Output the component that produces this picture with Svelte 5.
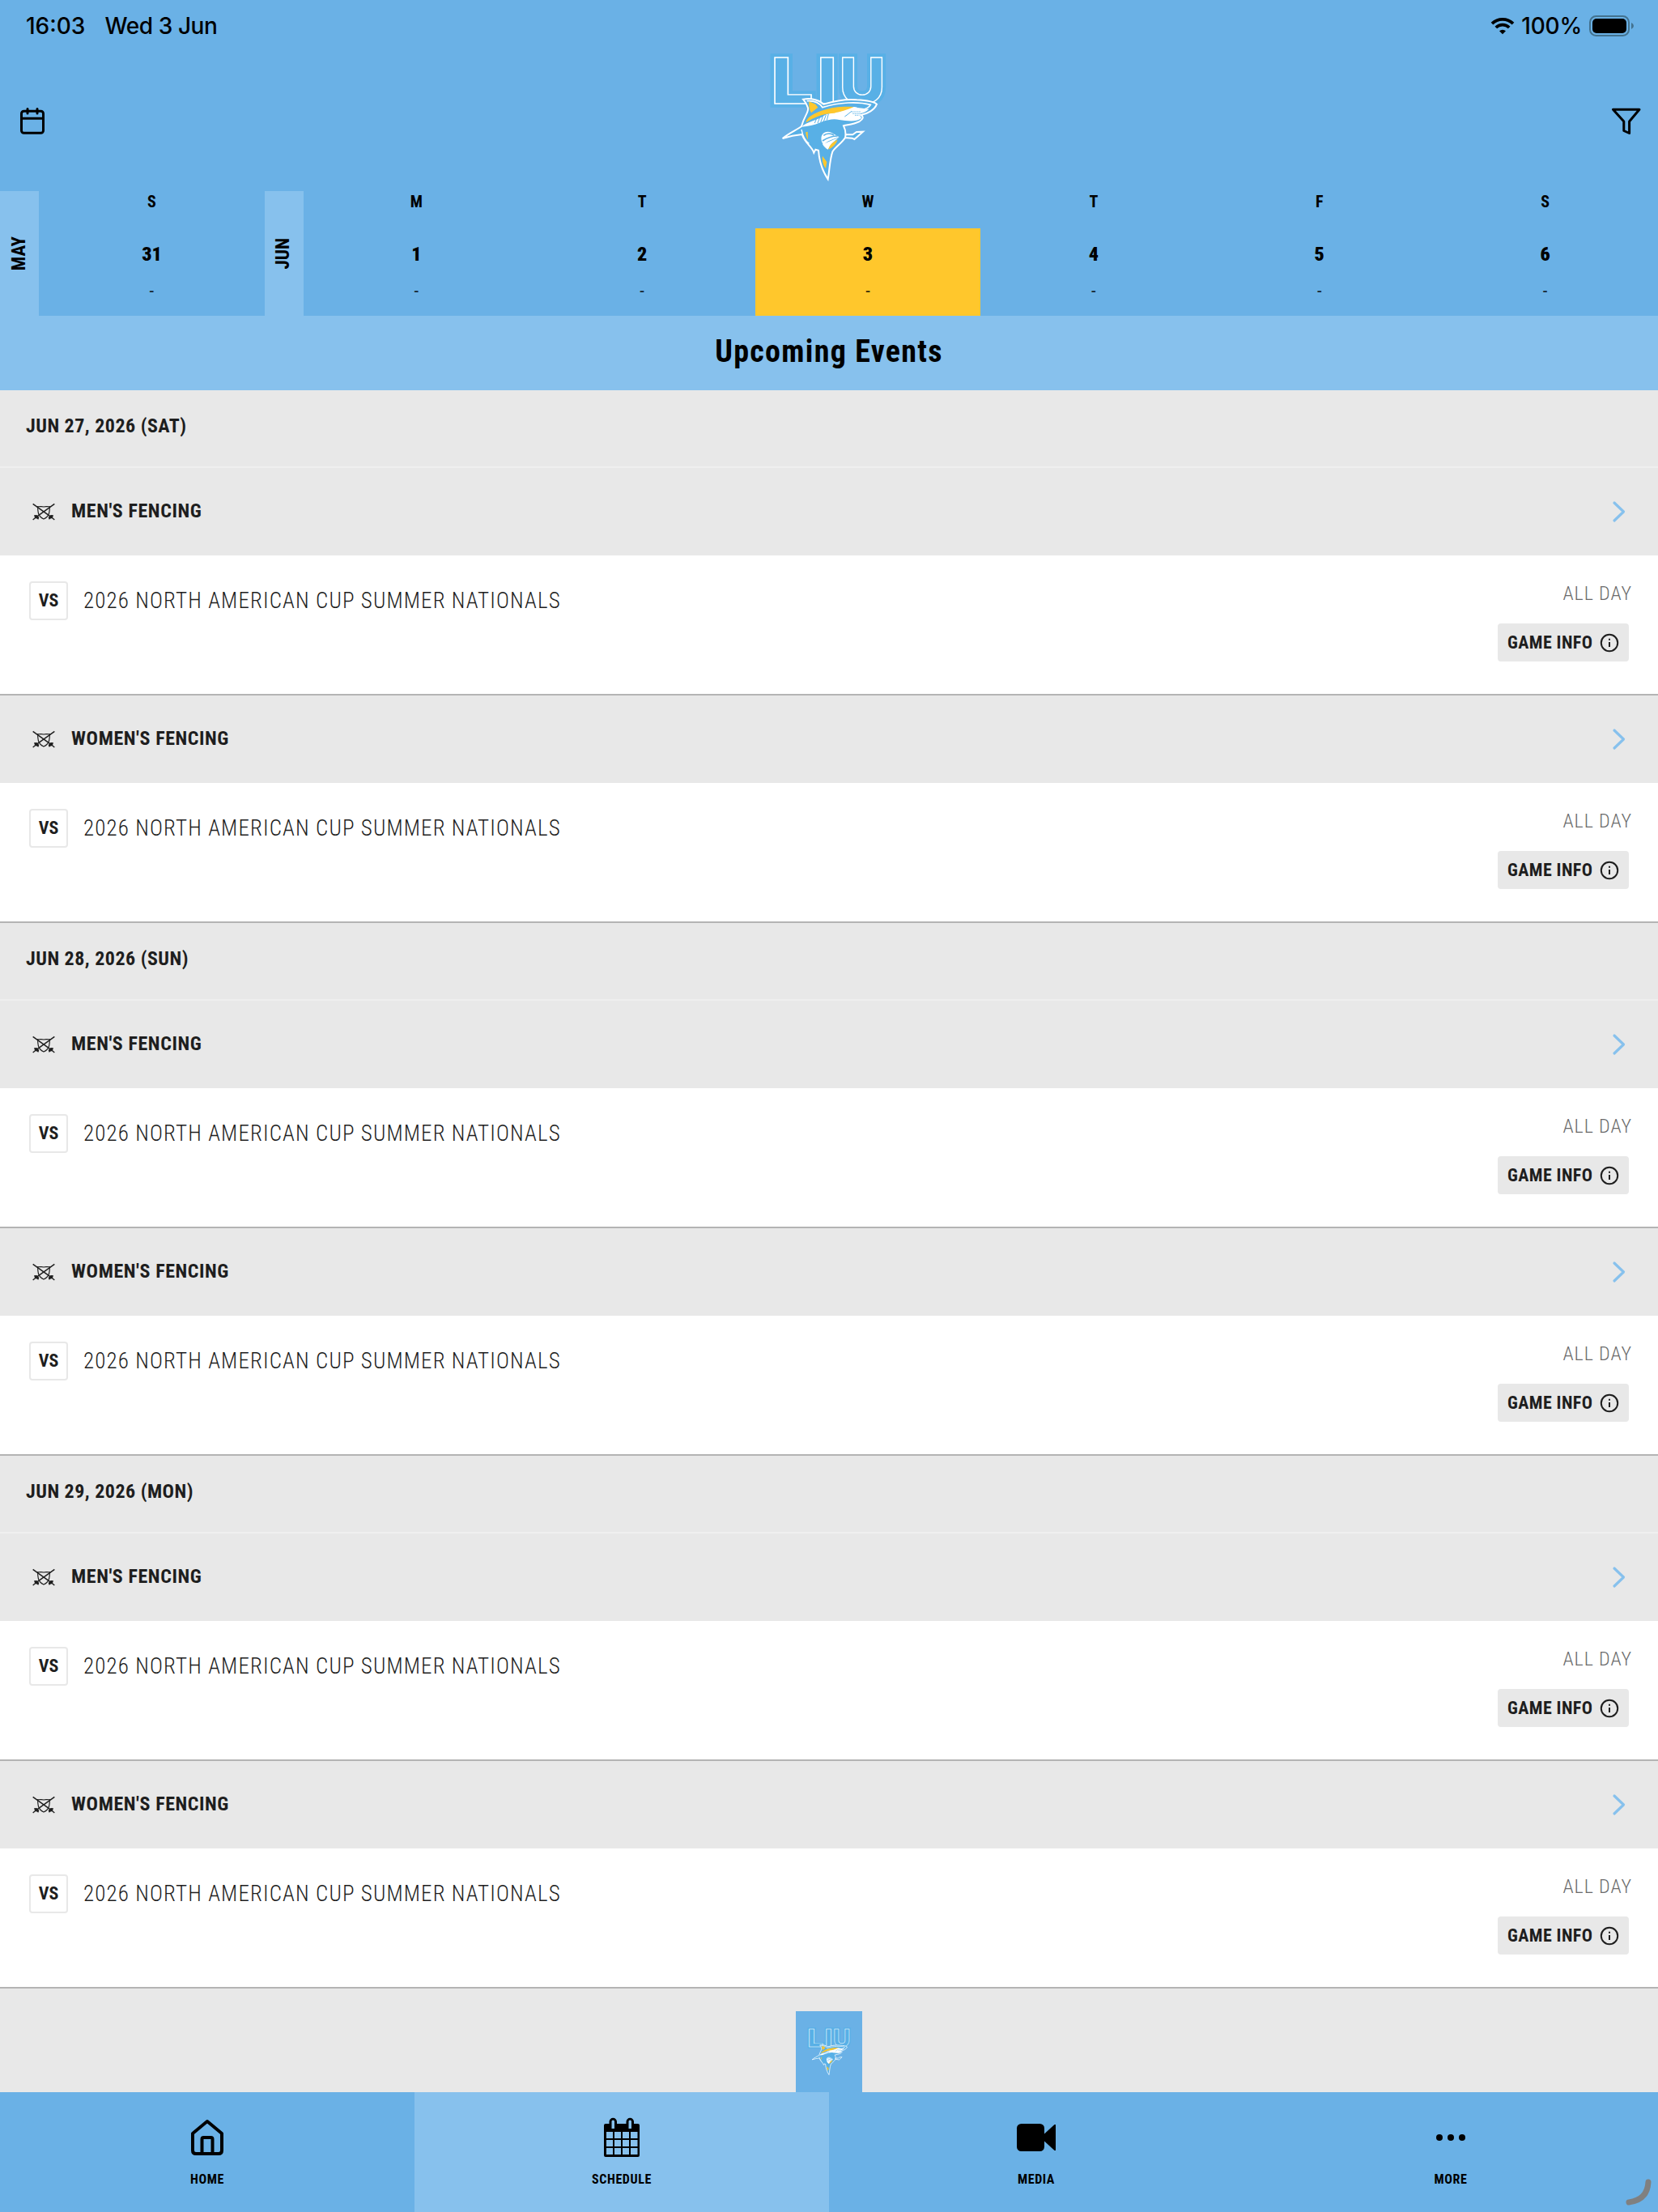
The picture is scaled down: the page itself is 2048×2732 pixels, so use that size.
<script lang="ts">
  type Game = { sport: string; title: string; time: string };

  const days = [
    { letter: 'M', num: 1 },
    { letter: 'T', num: 2 },
    { letter: 'W', num: 3 },
    { letter: 'T', num: 4 },
    { letter: 'F', num: 5 },
    { letter: 'S', num: 6 }
  ];

  const title = '2026 NORTH AMERICAN CUP SUMMER NATIONALS';
  const games: Game[] = [
    { sport: "MEN'S FENCING", title, time: 'ALL DAY' },
    { sport: "WOMEN'S FENCING", title, time: 'ALL DAY' }
  ];
  const events = ['JUN 27, 2026 (SAT)', 'JUN 28, 2026 (SUN)', 'JUN 29, 2026 (MON)'].map((date) => ({
    date,
    games
  }));

  const tabs = ['HOME', 'SCHEDULE', 'MEDIA', 'MORE'];
  let selected = $state(3);
  let active = $state('SCHEDULE');
</script>

{#snippet logo()}
  <svg class="logo" viewBox="-3 42 570 516" aria-label="LIU Sharks">
    {#each ['glow', 'edge'] as layer}
      <g class="letters {layer}">
        <text x="65" y="234" textLength="160" lengthAdjust="spacingAndGlyphs">L</text>
        <text x="236" y="234" textLength="77" lengthAdjust="spacingAndGlyphs">I</text>
        <text x="319" y="234" textLength="173" lengthAdjust="spacingAndGlyphs">U</text>
      </g>
    {/each}
    <path
      class="body"
      d="M186 218 C215 212 245 220 262 236 C310 222 345 216 385 220 C425 222 450 228 459 236 C452 256 425 272 400 276 C412 282 408 292 395 300 C370 312 350 312 336 316 C343 330 345 345 342 360 L368 362 L376 366 L408 338 L384 339 L370 349 L344 348 L342 360 C330 380 305 395 295 412 C285 440 284 480 278 514 C262 490 246 455 243 407 L232 404 L226 416 C218 390 195 385 182 348 C160 350 135 355 110 363 C130 345 165 330 180 318 C190 280 208 265 204 250 C200 235 195 228 186 218 Z"
    />
    <path class="line" d="M200 224 C232 222 250 236 258 248 C320 228 390 226 436 238 C430 250 412 256 398 258" />
    <path
      class="white"
      d="M180 320 C200 300 240 296 268 276 C300 262 320 272 350 250 C372 240 392 252 430 254 C420 264 408 268 398 270 L396 278 C400 282 402 286 402 288 C380 304 350 298 320 294 C296 288 270 296 250 304 C226 314 205 318 180 320 Z"
    />
    <path class="gold" d="M208 226 L232 236 L241 248 L216 268 C208 256 207 240 208 226 Z" />
    <path
      class="gold"
      d="M197 304 C200 286 216 276 250 262 C296 246 330 244 374 246 C345 260 326 262 302 269 C262 270 222 286 197 304 Z"
    />
    <path class="slit" d="M238 284 L229 306 M249 282 L240 306 M260 279 L251 304 M271 276 L262 300 M280 272 L274 296" />
    <path class="dots" d="M366 264 H400 M370 271 H398 M378 277 H394" />
    <path class="slit" d="M340 282 C352 274 358 268 366 262" />
    <path class="slit" d="M386 248 H408" />
    <path class="gold" d="M196 340 L203 338 L204 368 C199 358 196 350 196 340 Z" />
    <path class="line thin" d="M180 330 C186 360 196 374 208 382" />
    <path class="white" d="M254 356 C258 340 276 334 292 342 L320 358 C296 366 276 372 262 386 C254 378 252 366 254 356 Z" />
    <path class="slit wide" d="M262 352 C274 342 290 344 300 350 M258 372 C276 360 296 354 314 354" />
    <path class="white" d="M258 384 C276 378 296 368 318 360 C300 374 286 386 278 404 C270 400 262 392 258 384 Z" />
    <path class="gold" d="M280 404 C284 384 300 374 314 368 C308 384 296 396 280 404 Z" />
    <path class="gold" d="M258 428 L274 450 L270 474 C260 462 256 446 258 428 Z" />
  </svg>
{/snippet}

<div class="page">
  <div class="status">
    <span>16:03</span>
    <span class="day-name">Wed 3 Jun</span>
    <span class="system">
      <svg class="wifi" width="30" height="22" viewBox="0 0 30 22">
        <path d="M2 8.2 A18.5 18.5 0 0 1 28 8.2" />
        <path d="M6.8 13 A11.7 11.7 0 0 1 23.2 13" />
        <path class="tip" d="M11 17.2 A6 6 0 0 1 19 17.2 L15 21.2 Z" />
      </svg>
      <span class="percent">100%</span>
      <svg width="56" height="26" viewBox="0 0 56 26">
        <rect x="1" y="1" width="48" height="24" rx="7.5" fill="none" stroke="#43728f" stroke-width="2" />
        <rect x="4" y="4" width="42" height="18" rx="5" />
        <path d="M52 9 Q55 10.500 55 13 Q55 15.500 52 17 Z" fill="#43728f" />
      </svg>
    </span>
  </div>

  <header>
    <svg class="icon" width="32" height="36" viewBox="0 0 32 36">
      <rect x="2.500" y="5.200" width="27" height="27" rx="3" />
      <path d="M2.500 14.200 H29.500 M10 2.500 V8 M22 2.500 V8" />
    </svg>
    {@render logo()}
    <svg class="icon" width="38" height="36" viewBox="0 0 38 36">
      <path d="M2.500 3.200 H35 L22.600 18 V32.500 L15.800 29.500 V18 Z" />
    </svg>
  </header>

  <div class="week">
    <div class="month"><span>MAY</span></div>
    <div class="day">
      <span class="letter">S</span>
      <div class="cell"><b>31</b><i>-</i></div>
    </div>
    <div class="month"><span>JUN</span></div>
    {#each days as day}
      <div class="day">
        <span class="letter">{day.letter}</span>
        <button class="cell" class:selected={selected === day.num} onclick={() => (selected = day.num)}>
          <b>{day.num}</b><i>-</i>
        </button>
      </div>
    {/each}
  </div>

  <h1>Upcoming Events</h1>

  <main>
    {#each events as group}
      <h2>{group.date}</h2>
      {#each group.games as game}
        <section>
          <div class="sport">
            <svg class="foils" width="28" height="22" viewBox="60 62 84 66">
              <path d="M62 66 L134 118 M142 66 L70 118" stroke-width="4.500" />
              <path d="M80 76 C88 77 94 74 102 77 C110 74 116 77 124 76 C124 98 122 114 102 122 C82 114 80 98 80 76 Z" stroke-width="3.500" />
              <path d="M62 125 L70 118 M142 125 L134 118" stroke-width="4" />
              <path class="guard" d="M66 108 L76 107 L85 116 L82 124 L75 120 L70 120 Z M138 108 L128 107 L119 116 L122 124 L129 120 L134 120 Z" />
            </svg>
            <h3>{game.sport}</h3>
            <svg class="chevron" width="18" height="28" viewBox="0 0 18 28">
              <path d="M3 3 L14.500 14 L3 25" />
            </svg>
          </div>
          <div class="game">
            <span class="vs">VS</span>
            <span class="title">{game.title}</span>
            <div class="side">
              <span class="time">{game.time}</span>
              <button class="info">
                GAME INFO
                <svg width="24" height="24" viewBox="0 0 24 24">
                  <circle cx="12" cy="12" r="10.200" />
                  <path d="M12 11 V17 M12 6.800 V8.800" />
                </svg>
              </button>
            </div>
          </div>
        </section>
      {/each}
    {/each}
  </main>

  <footer>
    <div class="badge">{@render logo()}</div>
  </footer>

  <nav>
    {#each tabs as tab}
      <button class:active={active === tab} onclick={() => (active = tab)}>
        <svg width="52" height="52" viewBox="0 0 52 52">
          {#if tab === 'HOME'}
            <path
              class="stroke"
              d="M26 6 L44 21 V42 Q44 46 40 46 H12 Q8 46 8 42 V21 Z M19.500 46 V28 Q19.500 26 21.500 26 H30.500 Q32.500 26 32.500 28 V46"
            />
          {:else if tab === 'SCHEDULE'}
            <path
              fill-rule="evenodd"
              d="M6 9 H10.500 V6.500 A4.500 4.500 0 0 1 20 6.500 V9 H31.500 V6.500 A4.500 4.500 0 0 1 41 6.500 V9 H46 Q48 9 48 11 V48 Q48 50 46 50 H6 Q4 50 4 48 V11 Q4 9 6 9 Z M13.500 15 H17 V6 Q17 4.500 15.250 4.500 Q13.500 4.500 13.500 6 Z M34.500 15 H38 V6 Q38 4.500 36.250 4.500 Q34.500 4.500 34.500 6 Z M7 19 V27 H15 V19 Z M17 19 V27 H25 V19 Z M27 19 V27 H35 V19 Z M37 19 V27 H45.500 V19 Z M7 29 V37 H15 V29 Z M17 29 V37 H25 V29 Z M27 29 V37 H35 V29 Z M37 29 V37 H45.500 V29 Z M7 39 V47 H15 V39 Z M17 39 V47 H25 V39 Z M27 39 V47 H35 V39 Z M37 39 V47 H45.500 V39 Z"
            />
          {:else if tab === 'MEDIA'}
            <rect x="2" y="9" width="34" height="34" rx="5.500" />
            <path d="M36 21.500 L48.500 10 H50 V42 H48.500 L36 30.500 Z" />
          {:else}
            <circle cx="12" cy="26" r="4" />
            <circle cx="26" cy="26" r="4" />
            <circle cx="40" cy="26" r="4" />
          {/if}
        </svg>
        {tab}
      </button>
    {/each}
    <svg class="corner" width="40" height="40" viewBox="0 0 40 40">
      <path d="M28 7 Q27 29 4 32" />
    </svg>
  </nav>
</div>

<style>
  :global(body) {
    margin: 0;
  }
  .page {
    --blue: #6ab1e6;
    --light: #87c1ed;
    --gold: #ffc72c;
    --grey: #e8e8e8;
    --ink: #1e1e1e;
    display: flex;
    flex-direction: column;
    width: 2048px;
    height: 2732px;
    overflow: hidden;
    background: var(--blue);
    font-family: Roboto, sans-serif;
    font-stretch: 75%;
    color: #000;
  }
  button {
    border: none;
    padding: 0;
    background: none;
    color: inherit;
    font: inherit;
    letter-spacing: inherit;
    cursor: pointer;
  }

  .status {
    display: flex;
    align-items: center;
    height: 64px;
    box-sizing: border-box;
    padding: 0 29px 0 32px;
    font: 450 28px Inter, sans-serif;
  }
  .day-name {
    margin-left: 24px;
    letter-spacing: -0.4px;
  }
  .system {
    display: flex;
    align-items: center;
    margin-left: auto;
  }
  .percent {
    margin: 0 9px 0 8px;
    letter-spacing: -0.2px;
  }
  .wifi path {
    fill: none;
    stroke: #000;
    stroke-width: 3.8;
  }
  .wifi .tip {
    fill: #000;
    stroke: none;
  }

  header {
    display: grid;
    grid-template-columns: 1fr 190px 1fr;
    align-items: center;
    height: 172px;
    padding: 0 20px 0 24px;
  }
  header .icon {
    fill: none;
    stroke: #000;
    stroke-width: 3;
    stroke-linecap: round;
    stroke-linejoin: round;
  }
  header .icon:last-child {
    justify-self: end;
  }
  .logo {
    overflow: visible;
  }
  header .logo {
    width: 190px;
    height: 172px;
    margin-left: -2px;
  }
  .letters text {
    font: 800 237px Inter, sans-serif;
    fill: #58b0e6;
    stroke-linejoin: miter;
  }
  .letters.glow text {
    stroke: #58b0e6;
    stroke-width: 28;
  }
  .letters.edge text {
    stroke: #fff;
    stroke-width: 4;
  }
  .body {
    fill: #58b0e6;
    stroke: #fff;
    stroke-width: 6;
  }
  .white {
    fill: #fff;
  }
  .gold {
    fill: var(--gold);
  }
  .line {
    fill: none;
    stroke: #fff;
    stroke-width: 5;
  }
  .line.thin {
    stroke-width: 4;
  }
  .slit {
    fill: none;
    stroke: #58b0e6;
    stroke-width: 3;
  }
  .slit.wide {
    stroke-width: 5;
  }
  .dots {
    stroke: #58b0e6;
    stroke-width: 3;
    stroke-dasharray: 4 3;
  }

  .week {
    display: grid;
    grid-template-columns: 48px 1fr 48px repeat(6, 1fr);
    height: 154px;
    font-weight: 700;
  }
  .month {
    display: flex;
    align-items: center;
    justify-content: center;
    background: var(--light);
    font-size: 23px;
  }
  .month span {
    margin-right: 2px;
    writing-mode: vertical-rl;
    transform: rotate(180deg);
  }
  .day {
    display: flex;
    flex-direction: column;
    text-align: center;
  }
  .letter {
    height: 46px;
    line-height: 27px;
    font-size: 20px;
  }
  .cell {
    display: flex;
    flex-direction: column;
    height: 108px;
    align-items: center;
  }
  .cell.selected {
    background: var(--gold);
  }
  .cell b {
    font-size: 24px;
    line-height: 64px;
  }
  .cell i {
    font: 500 18px/28px Roboto, sans-serif;
    opacity: 0.8;
  }

  h1 {
    margin: 0;
    height: 92px;
    background: var(--light);
    font-size: 38px;
    font-weight: 700;
    letter-spacing: 1.3px;
    line-height: 89px;
    text-align: center;
  }
  main {
    background: #fff;
    color: var(--ink);
  }
  h2 {
    margin: 0;
    padding-left: 32px;
    height: 94px;
    border-bottom: 2px solid #efefef;
    background: var(--grey);
    font-size: 24px;
    font-weight: 700;
    letter-spacing: 0.48px;
    line-height: 88px;
  }
  section {
    border-bottom: 2px solid #b4b4b4;
  }
  .sport {
    display: flex;
    align-items: center;
    height: 108px;
    padding: 0 39px 0 40px;
    background: var(--grey);
  }
  .foils {
    fill: none;
    stroke: var(--ink);
  }
  .foils .guard {
    fill: var(--ink);
    stroke: none;
  }
  h3 {
    margin: 0 0 2px 20px;
    font-size: 24px;
    font-weight: 700;
    letter-spacing: 0.58px;
  }
  .chevron {
    margin-left: auto;
    fill: none;
    stroke: var(--light);
    stroke-width: 3.2;
    stroke-linecap: round;
    stroke-linejoin: round;
  }
  .game {
    display: flex;
    align-items: flex-start;
    height: 171px;
    box-sizing: border-box;
    padding: 32px 33px 0 36px;
  }
  .vs {
    width: 48px;
    height: 48px;
    box-sizing: border-box;
    border: 2px solid var(--grey);
    border-radius: 4px;
    font-size: 22px;
    font-weight: 700;
    line-height: 44px;
    text-align: center;
  }
  .title {
    margin-left: 19px;
    font-size: 27px;
    font-weight: 300;
    letter-spacing: 1.13px;
    line-height: 48px;
  }
  .side {
    display: flex;
    flex-direction: column;
    align-items: flex-end;
    margin-left: auto;
  }
  .time {
    margin-right: -1px;
    color: #6a6a6a;
    font-size: 24px;
    font-weight: 300;
    letter-spacing: 0.95px;
    line-height: 30px;
  }
  .info {
    display: flex;
    align-items: center;
    width: 162px;
    height: 47px;
    margin: 22px 3px 0 0;
    padding: 0 12px;
    box-sizing: border-box;
    justify-content: space-between;
    border-radius: 4px;
    background: var(--grey);
    font-size: 22px;
    font-weight: 700;
    letter-spacing: 0.4px;
    line-height: 44px;
    white-space: nowrap;
  }
  .info svg {
    fill: none;
    stroke: var(--ink);
    stroke-width: 2;
  }

  footer {
    display: flex;
    justify-content: center;
    height: 128px;
    background: var(--grey);
  }
  .badge {
    display: flex;
    justify-content: center;
    width: 82px;
    margin-top: 28px;
    background: var(--blue);
  }
  .badge .logo {
    width: 71px;
    height: 64px;
    margin-top: 20px;
  }

  nav {
    position: relative;
    display: grid;
    grid-template-columns: repeat(4, 1fr);
    height: 148px;
    font-size: 16px;
    font-weight: 700;
    letter-spacing: 0.6px;
  }
  nav button {
    display: flex;
    flex-direction: column;
    align-items: center;
    padding-top: 30px;
    gap: 16px;
  }
  nav .active {
    background: var(--light);
  }
  .stroke {
    fill: none;
    stroke: #000;
    stroke-width: 4;
    stroke-linejoin: round;
  }
  .corner {
    position: absolute;
    right: 0;
    bottom: 4px;
    fill: none;
    stroke: #808080;
    stroke-width: 7;
    stroke-linecap: round;
  }
</style>
